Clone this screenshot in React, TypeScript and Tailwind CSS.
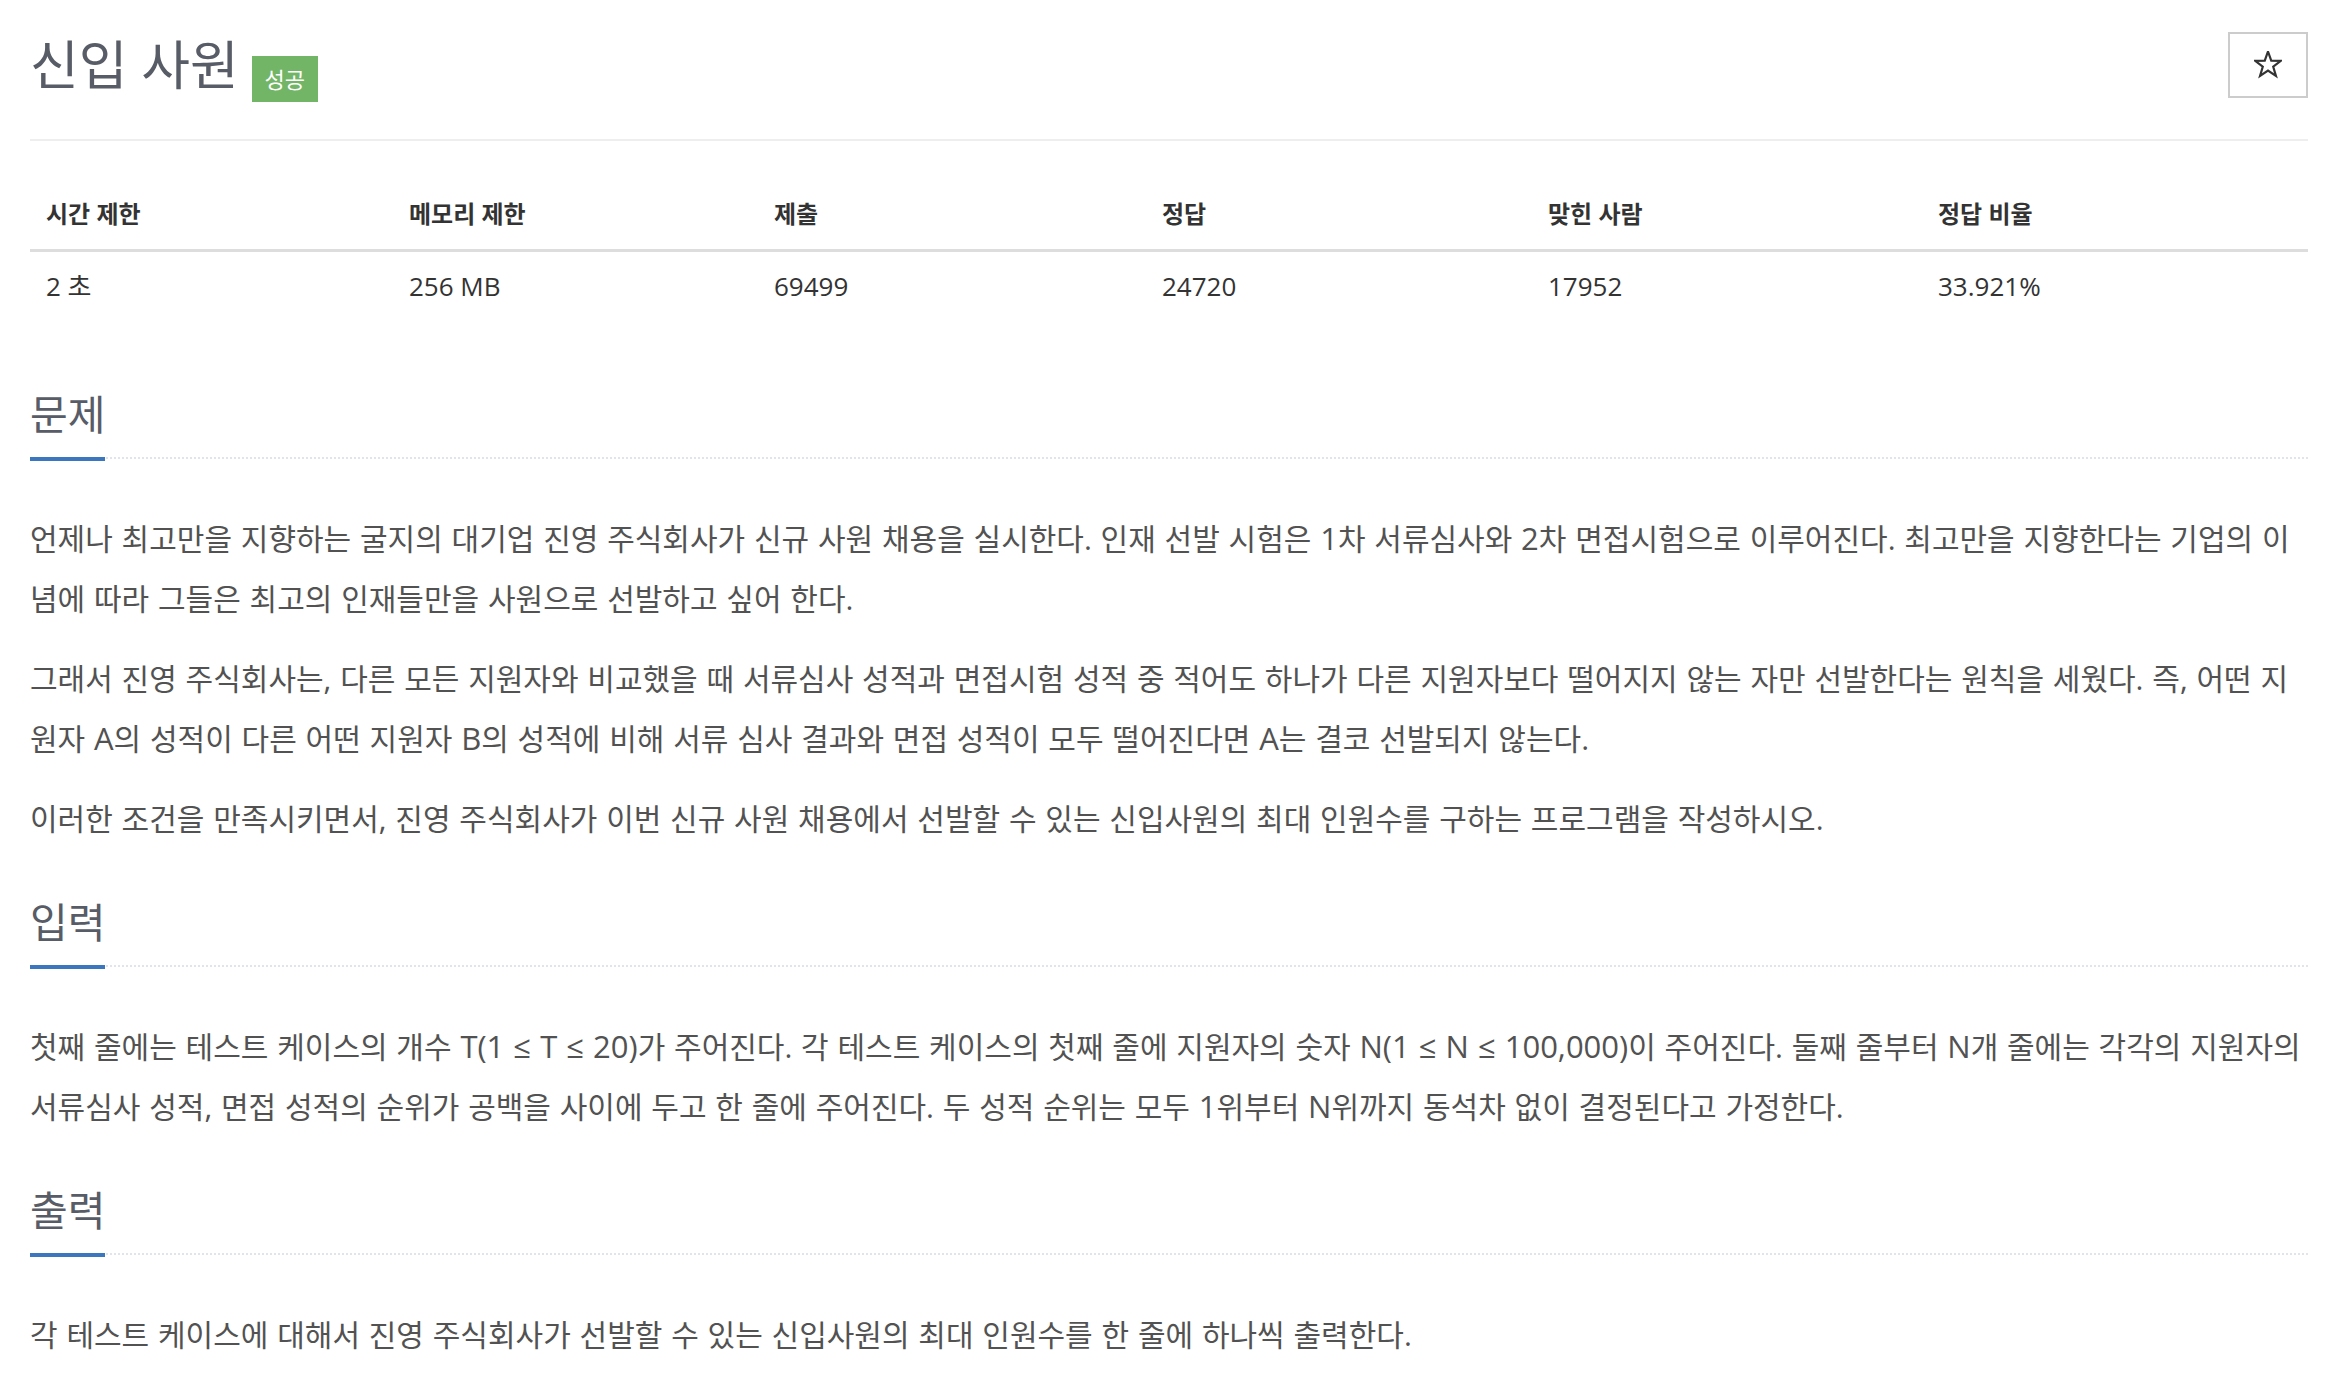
import React from 'react';

type Stat = { label: string; value: string };

const stats: Stat[] = [
  { label: '시간 제한', value: '2 초' },
  { label: '메모리 제한', value: '256 MB' },
  { label: '제출', value: '69499' },
  { label: '정답', value: '24720' },
  { label: '맞힌 사람', value: '17952' },
  { label: '정답 비율', value: '33.921%' },
];

// latin runs are drawn a bit larger than the hangul, like the original page
const L = ({ children }: { children: React.ReactNode }) => (
  <span className="text-[31px] leading-none">{children}</span>
);

const StarIcon = () => (
  <svg width="28" height="28" viewBox="0 0 28 28" aria-hidden="true">
    <polygon
      points="14,0.5 17.23,9.55 26.84,9.83 19.23,15.7 21.94,24.92 14,19.5 6.06,24.92 8.77,15.7 1.16,9.83 10.77,9.55"
      fill="none"
      stroke="#333"
      strokeWidth="2.2"
    />
  </svg>
);

type SectionProps = {
  title: string;
  className?: string;
  children: React.ReactNode;
};

const Section = ({ title, className, children }: SectionProps) => (
  <section className={className}>
    <div className="flex border-b-2 border-dotted border-[#e1e4e9]">
      <h2 className="-mb-[4px] border-b-4 border-[#3a77bf] pb-[18px] text-[41px] leading-[50px] text-[#575c66]">
        {title}
      </h2>
    </div>
    <div className="mt-[50px] whitespace-nowrap text-[30px] leading-[60px] text-[#525252] [word-spacing:1px]">
      {children}
    </div>
  </section>
);

const App = () => {
  return (
    <div className="min-h-screen bg-white pl-[30px] pr-[36px] font-['Open_Sans','Noto_Sans_CJK_KR',sans-serif]">
      <div className="flex h-[98px] items-start justify-between pt-[32px]">
        <div className="flex items-start">
          <h1 className="text-[53px] leading-[66px] text-[#575c66]">신입 사원</h1>
          <span className="ml-[13px] mt-[24px] flex h-[46px] w-[66px] items-center justify-center bg-[#73b566] text-[22px] text-white">
            성공
          </span>
        </div>
        <button className="flex h-[66px] w-[80px] items-center justify-center border-2 border-[#ccc] bg-white">
          <StarIcon />
        </button>
      </div>

      <div className="mt-[41px] h-[2px] bg-[#eee]" />

      <div className="mt-[38px] grid grid-cols-[363px_365px_388px_386px_390px_386px]">
        {stats.map((s) => (
          <div
            key={s.label}
            className="flex h-[73px] items-center border-b-[3px] border-[#ddd] px-[16px] text-[24px] font-bold text-[#333]"
          >
            {s.label}
          </div>
        ))}
        {stats.map((s) => (
          <div
            key={s.label + '-v'}
            className="flex h-[68px] items-center px-[16px] text-[26px] text-[#333]"
          >
            {s.value}
          </div>
        ))}
      </div>

      <Section title="문제" className="mt-[69px]">
        <p className="mb-[20px]">
          언제나 최고만을 지향하는 굴지의 대기업 진영 주식회사가 신규 사원 채용을 실시한다. 인재 선발 시험은 <L>1</L>차 서류심사와 <L>2</L>차 면접시험으로 이루어진다. 최고만을 지향한다는 기업의 이
          <br />
          념에 따라 그들은 최고의 인재들만을 사원으로 선발하고 싶어 한다.
        </p>
        <p className="mb-[20px]">
          그래서 진영 주식회사는, 다른 모든 지원자와 비교했을 때 서류심사 성적과 면접시험 성적 중 적어도 하나가 다른 지원자보다 떨어지지 않는 자만 선발한다는 원칙을 세웠다. 즉, 어떤 지
          <br />
          원자 <L>A</L>의 성적이 다른 어떤 지원자 <L>B</L>의 성적에 비해 서류 심사 결과와 면접 성적이 모두 떨어진다면 <L>A</L>는 결코 선발되지 않는다.
        </p>
        <p className="mb-[20px]">
          이러한 조건을 만족시키면서, 진영 주식회사가 이번 신규 사원 채용에서 선발할 수 있는 신입사원의 최대 인원수를 구하는 프로그램을 작성하시오.
        </p>
      </Section>

      <Section title="입력" className="mt-[48px]">
        <p className="mb-[20px]">
          첫째 줄에는 테스트 케이스의 개수 <L>T(1 ≤ T ≤ 20)</L>가 주어진다. 각 테스트 케이스의 첫째 줄에 지원자의 숫자 <L>N(1 ≤ N ≤ 100,000)</L>이 주어진다. 둘째 줄부터 <L>N</L>개 줄에는 각각의 지원자의
          <br />
          서류심사 성적, 면접 성적의 순위가 공백을 사이에 두고 한 줄에 주어진다. 두 성적 순위는 모두 <L>1</L>위부터 <L>N</L>위까지 동석차 없이 결정된다고 가정한다.
        </p>
      </Section>

      <Section title="출력" className="mt-[48px]">
        <p className="mb-[20px]">
          각 테스트 케이스에 대해서 진영 주식회사가 선발할 수 있는 신입사원의 최대 인원수를 한 줄에 하나씩 출력한다.
        </p>
      </Section>
    </div>
  );
};

export default App;
